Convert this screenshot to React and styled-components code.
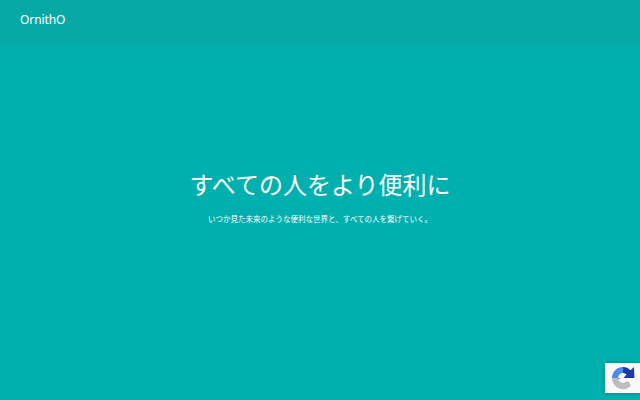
import React from "react";
import styled, { createGlobalStyle } from "styled-components";

const GlobalStyle = createGlobalStyle`
  html, body {
    margin: 0;
    padding: 0;
    height: 100%;
    overflow: hidden;
  }

  #root {
    height: 100%;
  }
`;

const Page = styled.div`
  position: relative;
  display: flex;
  flex-direction: column;
  width: 640px;
  height: 400px;
  background: #00b0ae;
  color: #fff;
  font-family: "Noto Sans", "Noto Sans CJK JP", sans-serif;
`;

const Header = styled.header`
  display: flex;
  align-items: center;
  height: 44px;
  padding: 0 20px;
  background: #07a9a7;
`;

const Logo = styled.a`
  font-size: 12px;
  letter-spacing: -0.1px;
  line-height: 1;
  position: relative;
  top: -2px;
`;

const Hero = styled.main`
  display: flex;
  flex-direction: column;
  align-items: center;
  padding-top: 124px;
`;

const Title = styled.h1`
  margin: 0;
  font-family: "Noto Sans CJK JP", sans-serif;
  font-size: 24px;
  font-weight: 400;
  line-height: 32px;
`;

const Lead = styled.p`
  margin: 13px 0 0;
  font-family: "Noto Sans CJK JP", sans-serif;
  font-size: 7.5px;
  line-height: 12px;
`;

const Recaptcha = styled.div`
  position: absolute;
  right: 0;
  bottom: 7px;
  display: flex;
  align-items: center;
  justify-content: center;
  width: 35px;
  height: 30px;
  background: #f9f9f9;
  box-shadow: 0 0 4px rgba(0, 0, 0, 0.3);
`;

const RecaptchaIcon = () => (
  <svg width="24" height="24" viewBox="0 0 24 24" fill="none">
    <path d="M1 12 A11 11 0 0 1 12 1 L15 1.4 L12 7 A5 5 0 0 0 7 12 L10 12 L4 15 Z" fill="#4a8af0" />
    <path d="M12 1 A11 11 0 0 1 19.6 4.2 L23 1 L23.4 12 L12.5 12 L15.6 8.5 A5 5 0 0 0 12 7 Z" fill="#1c3aa9" />
    <path d="M1 12 L7 12 A5 5 0 0 0 12 17 L17 15 L20 19.6 A11 11 0 0 1 1 12 Z" fill="#bdbdbd" />
  </svg>
);

export default function App() {
  return (
    <>
      <GlobalStyle />
      <Page>
        <Header>
          <Logo>OrnithO</Logo>
        </Header>
        <Hero>
          <Title>すべての人をより便利に</Title>
          <Lead>いつか見た未来のような便利な世界と、すべての人を繋げていく。</Lead>
        </Hero>
        <Recaptcha>
          <RecaptchaIcon />
        </Recaptcha>
      </Page>
    </>
  );
}
